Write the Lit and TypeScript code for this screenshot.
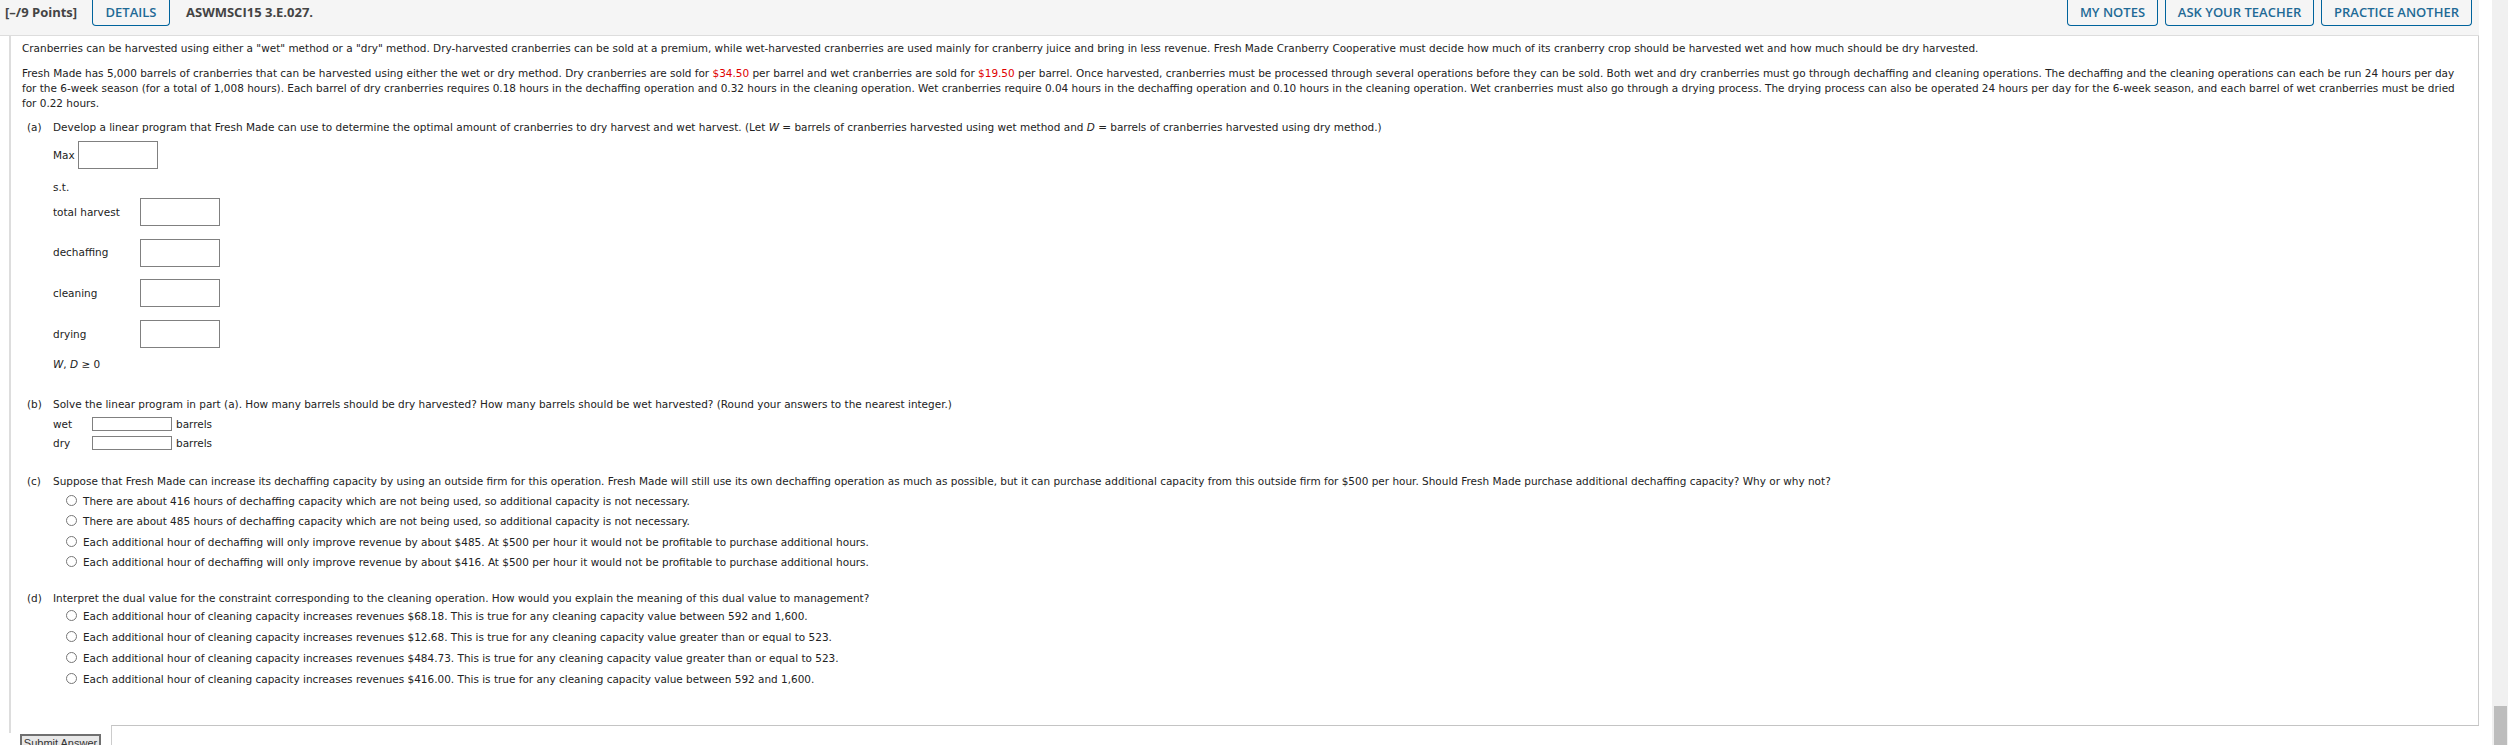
import { LitElement, html, css } from 'lit';
import { customElement } from 'lit/decorators.js';

const optionsC = [
  'There are about 416 hours of dechaffing capacity which are not being used, so additional capacity is not necessary.',
  'There are about 485 hours of dechaffing capacity which are not being used, so additional capacity is not necessary.',
  'Each additional hour of dechaffing will only improve revenue by about $485. At $500 per hour it would not be profitable to purchase additional hours.',
  'Each additional hour of dechaffing will only improve revenue by about $416. At $500 per hour it would not be profitable to purchase additional hours.',
];

const optionsD = [
  'Each additional hour of cleaning capacity increases revenues $68.18. This is true for any cleaning capacity value between 592 and 1,600.',
  'Each additional hour of cleaning capacity increases revenues $12.68. This is true for any cleaning capacity value greater than or equal to 523.',
  'Each additional hour of cleaning capacity increases revenues $484.73. This is true for any cleaning capacity value greater than or equal to 523.',
  'Each additional hour of cleaning capacity increases revenues $416.00. This is true for any cleaning capacity value between 592 and 1,600.',
];

const constraints = ['total harvest', 'dechaffing', 'cleaning', 'drying'];

@customElement('app-root')
export class AppRoot extends LitElement {
  static styles = css`
    :host {
      display: block;
      height: 745px;
      overflow: hidden;
      background: #fff;
      font-family: 'DejaVu Sans', Verdana, sans-serif;
      font-size: 10.47px;
      color: #222;
    }
    .page {
      display: flex;
      height: 745px;
    }
    .main {
      width: 2479px;
      flex: none;
    }
    .gutter {
      width: 13px;
      flex: none;
    }
    /* Scrollbar */
    .track {
      width: 16px;
      flex: none;
      background: #f0f0f0;
      display: flex;
      flex-direction: column;
      justify-content: flex-end;
      align-items: center;
    }
    .thumb {
      width: 13px;
      height: 39px;
      background: #bdbdbd;
    }
    .top {
      height: 35px;
      background: #f5f5f5;
      border-bottom: 1px solid #ddd;
      display: flex;
      align-items: flex-start;
      font-family: 'Open Sans', sans-serif;
      font-size: 13px;
      line-height: 18px;
    }
    .points {
      font-weight: 700;
      margin: 3px 0 0 5px;
      width: 87px;
      flex: none;
      white-space: nowrap;
      color: #444;
    }
    .title {
      font-weight: 700;
      margin: 3px 0 0 16px;
      color: #444;
    }
    .btn {
      box-sizing: border-box;
      height: 26px;
      padding-top: 3px;
      text-align: center;
      border: 1px solid #00639c;
      border-top: none;
      border-radius: 0 0 4px 4px;
      color: #1f6a96;
      font-weight: 600;
      white-space: nowrap;
      flex: none;
    }
    .details {
      width: 78px;
    }
    .notes {
      width: 91px;
    }
    .ask {
      width: 149px;
    }
    .practice {
      width: 151px;
    }
    .actions {
      margin-left: auto;
      display: flex;
      gap: 7px;
      margin-right: 7px;
    }
    .content {
      box-sizing: border-box;
      height: 689px;
      margin-left: 9px;
      border-left: 2px solid #ddd;
      border-right: 1px solid #ccc;
      padding: 5px 14px 0 11px;
      line-height: 15px;
    }
    p {
      margin: 0;
    }
    .intro {
      margin-bottom: 10px;
    }
    .red {
      color: #e00000;
    }
    .part {
      display: flex;
      margin-left: 5px;
    }
    .part-a {
      margin-top: 9px;
    }
    .part-b {
      margin-top: 25px;
    }
    .part-c {
      margin-top: 23.5px;
    }
    .part-d {
      margin-top: 21px;
    }
    .tag {
      width: 26px;
      flex: none;
    }
    .body {
      flex: 1;
    }
    input[type='text'] {
      display: block;
      box-sizing: border-box;
      margin: 0;
      padding: 0;
      border: 1px solid #808080;
      background: #fff;
    }
    .max {
      display: flex;
      align-items: center;
      gap: 3px;
      margin-top: 6px;
    }
    .big {
      width: 80px;
      height: 28px;
    }
    .st {
      margin-top: 11px;
    }
    .row {
      display: flex;
      align-items: center;
      height: 28px;
      margin-top: 12.7px;
    }
    .row span {
      width: 87px;
    }
    .st + .row {
      margin-top: 3px;
    }
    .nonneg {
      margin-top: 9px;
    }
    .nonneg i {
      font-style: italic;
    }
    .answers {
      display: grid;
      grid-template-columns: 39px 80px max-content;
      row-gap: 4px;
      align-items: center;
      margin-top: 4.5px;
    }
    .answers input {
      width: 80px;
      height: 14px;
    }
    .answers .unit {
      margin-left: 4px;
    }
    .opts {
      margin: 4.5px 0 0 13px;
      display: flex;
      flex-direction: column;
      gap: 5.5px;
    }
    .part-d .opts {
      margin-top: 3px;
      gap: 6px;
    }
    .opt {
      display: flex;
      align-items: center;
      gap: 6px;
      height: 15px;
    }
    .radio {
      box-sizing: border-box;
      width: 11px;
      height: 11px;
      margin-top: -2px;
      border: 1px solid #777;
      border-radius: 50%;
      background: #fff;
      flex: none;
    }
    .foot {
      display: flex;
      align-items: flex-start;
      height: 20px;
      margin-left: 9px;
    }
    .foot .left {
      width: 102px;
      flex: none;
      height: 20px;
    }
    .foot .rest {
      flex: 1;
      height: 20px;
      border-left: 1px solid #ccc;
      border-top: 1px solid #c4c4c4;
      box-sizing: border-box;
    }
    .submit {
      display: block;
      font-family: 'Liberation Sans', Arial, sans-serif;
      font-size: 11px;
      line-height: 15px;
      box-sizing: border-box;
      width: 81px;
      height: 18px;
      margin: 1px 0 0 11px;
      padding: 0;
      border: 2px solid #707070;
      background: #e8e8e8;
      color: #333;
    }
    .edge {
      width: 2px;
      height: 8px;
      background: #ddd;
    }
  `;

  renderChoices(items: string[]) {
    return html`
      <div class="opts">
        ${items.map((t) => html`<div class="opt"><span class="radio"></span><span>${t}</span></div>`)}
      </div>
    `;
  }

  render() {
    return html`
      <div class="page">
        <div class="main">
          <div class="top">
            <span class="points">[–/9 Points]</span>
            <span class="btn details">DETAILS</span>
            <span class="title">ASWMSCI15 3.E.027.</span>
            <div class="actions">
              <span class="btn notes">MY NOTES</span>
              <span class="btn ask">ASK YOUR TEACHER</span>
              <span class="btn practice">PRACTICE ANOTHER</span>
            </div>
          </div>
          <div class="content">
            <p class="intro">Cranberries can be harvested using either a "wet" method or a "dry" method. Dry-harvested cranberries can be sold at a premium, while wet-harvested cranberries are used mainly for cranberry juice and bring in less revenue. Fresh Made Cranberry Cooperative must decide how much of its cranberry crop should be harvested wet and how much should be dry harvested.</p>
            <p>Fresh Made has 5,000 barrels of cranberries that can be harvested using either the wet or dry method. Dry cranberries are sold for <span class="red">$34.50</span> per barrel and wet cranberries are sold for <span class="red">$19.50</span> per barrel. Once harvested, cranberries must be processed through several operations before they can be sold. Both wet and dry cranberries must go through dechaffing and cleaning operations. The dechaffing and the cleaning operations can each be run 24 hours per day for the 6-week season (for a total of 1,008 hours). Each barrel of dry cranberries requires 0.18 hours in the dechaffing operation and 0.32 hours in the cleaning operation. Wet cranberries require 0.04 hours in the dechaffing operation and 0.10 hours in the cleaning operation. Wet cranberries must also go through a drying process. The drying process can also be operated 24 hours per day for the 6-week season, and each barrel of wet cranberries must be dried for 0.22 hours.</p>

            <div class="part part-a">
              <span class="tag">(a)</span>
              <div class="body">
                <p>Develop a linear program that Fresh Made can use to determine the optimal amount of cranberries to dry harvest and wet harvest. (Let <i>W</i> = barrels of cranberries harvested using wet method and <i>D</i> = barrels of cranberries harvested using dry method.)</p>
                <div class="max"><span>Max</span><input type="text" class="big" /></div>
                <p class="st">s.t.</p>
                ${constraints.map((c) => html`<div class="row"><span>${c}</span><input type="text" class="big" /></div>`)}
                <p class="nonneg"><i>W</i>, <i>D</i> ≥ 0</p>
              </div>
            </div>

            <div class="part part-b">
              <span class="tag">(b)</span>
              <div class="body">
                <p>Solve the linear program in part (a). How many barrels should be dry harvested? How many barrels should be wet harvested? (Round your answers to the nearest integer.)</p>
                <div class="answers">
                  <span>wet</span><input type="text" /><span class="unit">barrels</span>
                  <span>dry</span><input type="text" /><span class="unit">barrels</span>
                </div>
              </div>
            </div>

            <div class="part part-c">
              <span class="tag">(c)</span>
              <div class="body">
                <p>Suppose that Fresh Made can increase its dechaffing capacity by using an outside firm for this operation. Fresh Made will still use its own dechaffing operation as much as possible, but it can purchase additional capacity from this outside firm for $500 per hour. Should Fresh Made purchase additional dechaffing capacity? Why or why not?</p>
                ${this.renderChoices(optionsC)}
              </div>
            </div>

            <div class="part part-d">
              <span class="tag">(d)</span>
              <div class="body">
                <p>Interpret the dual value for the constraint corresponding to the cleaning operation. How would you explain the meaning of this dual value to management?</p>
                ${this.renderChoices(optionsD)}
              </div>
            </div>
          </div>
          <div class="foot">
            <div class="left">
              <div class="edge"></div>
              <button class="submit">Submit Answer</button>
            </div>
            <div class="rest"></div>
          </div>
        </div>
        <div class="gutter"></div>
        <div class="track"><div class="thumb"></div></div>
      </div>
    `;
  }
}
